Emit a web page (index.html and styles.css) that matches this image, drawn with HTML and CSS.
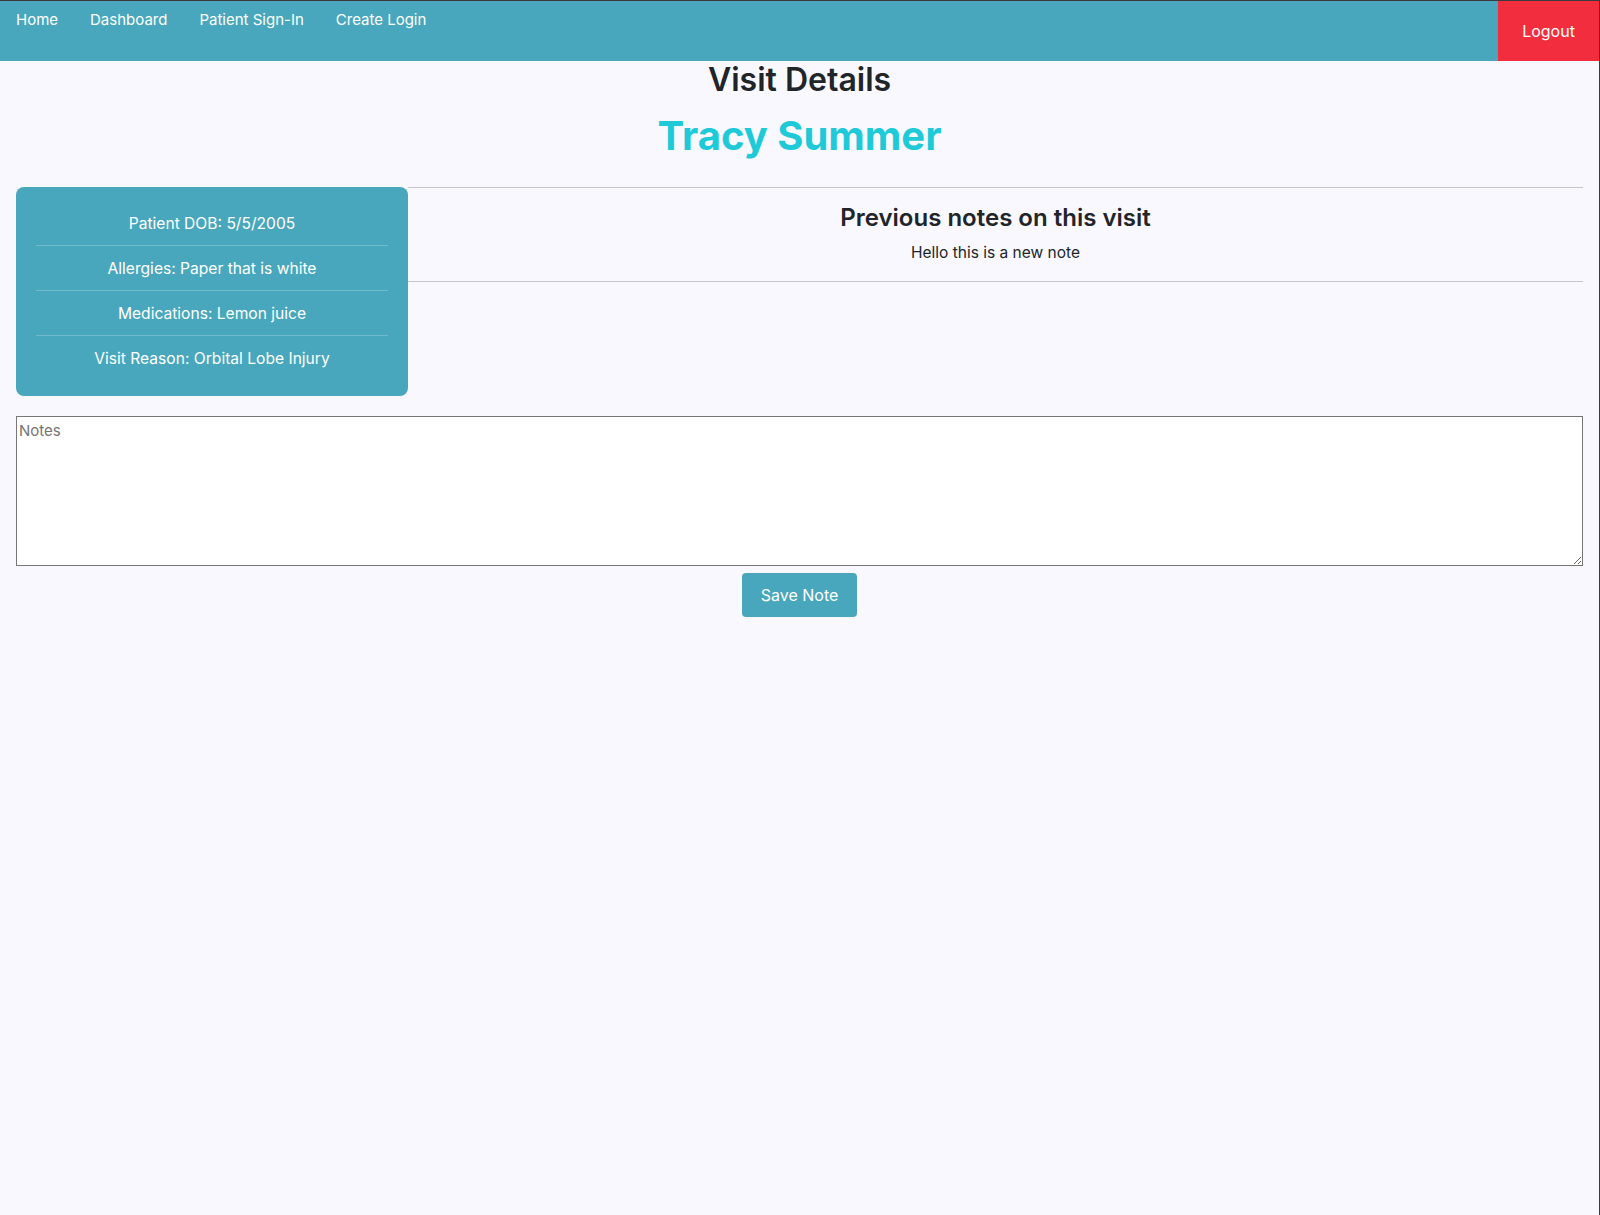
FILE: index.html
```html
<!DOCTYPE html>
<html lang="en">
<head>
<meta charset="utf-8">
<title>Visit Details</title>
<link rel="stylesheet" href="styles.css">
</head>
<body>
<div class="frame">
  <nav class="navbar">
    <div class="nav-links">
      <a href="#" class="nav-link">Home</a>
      <a href="#" class="nav-link">Dashboard</a>
      <a href="#" class="nav-link">Patient Sign-In</a>
      <a href="#" class="nav-link">Create Login</a>
    </div>
    <a href="#" class="logout">Logout</a>
  </nav>
  <main class="page">
    <h1 class="title">Visit Details</h1>
    <h2 class="patient-name">Tracy Summer</h2>
    <div class="visit-row">
      <ul class="info-card">
        <li class="info-item">Patient DOB: 5/5/2005</li>
        <li class="info-item">Allergies: Paper that is white</li>
        <li class="info-item">Medications: Lemon juice</li>
        <li class="info-item">Visit Reason: Orbital Lobe Injury</li>
      </ul>
      <section class="notes-section">
        <h3 class="notes-title">Previous notes on this visit</h3>
        <p class="note">Hello this is a new note</p>
      </section>
    </div>
    <textarea class="notes-input" placeholder="Notes"></textarea>
    <div class="actions">
      <button class="save-btn" type="button">Save Note</button>
    </div>
  </main>
</div>
</body>
</html>
```
FILE: styles.css
```css
html, body {
  margin: 0;
  padding: 0;
  height: 100%;
}
body {
  background: #f9f8fe;
  font-family: Inter, "Open Sans", "Liberation Sans", sans-serif;
  color: #212529;
}
.frame {
  min-height: 100%;
  box-sizing: border-box;
  border-top: 1px solid #3a3a3a;
  border-right: 1px solid #3a3a3a;
}
.navbar {
  height: 60px;
  background: #48a7bc;
  display: flex;
  justify-content: space-between;
  align-items: stretch;
}
.nav-links {
  display: flex;
  align-items: flex-start;
  padding-left: 16px;
  gap: 32px;
  padding-top: 9px;
}
.nav-link {
  color: #ffffff;
  text-decoration: none;
  font-size: 15px;
  line-height: 20px;
}
.logout {
  background: #f22e3e;
  color: #ffffff;
  text-decoration: none;
  font-size: 16px;
  width: 101px;
  display: flex;
  align-items: center;
  justify-content: center;
  box-sizing: border-box;
}
.page {
  padding: 0 16px;
}
.title {
  margin: 0;
  text-align: center;
  font-size: 32px;
  font-weight: 600;
  line-height: 38px;
  color: #212529;
}
.patient-name {
  margin: 0;
  padding-top: 13px;
  text-align: center;
  font-size: 40px;
  font-weight: 700;
  line-height: 48px;
  color: #1fcad8;
}
.visit-row {
  display: flex;
  align-items: flex-start;
  margin-top: 27px;
}
.info-card {
  list-style: none;
  margin: 0;
  width: 392px;
  box-sizing: border-box;
  padding: 14px 20px 15px;
  background: #48a7bc;
  border-radius: 8px;
  color: #ffffff;
}
.info-item {
  height: 45px;
  display: flex;
  align-items: center;
  justify-content: center;
  font-size: 15.6px;
  border-bottom: 1px solid rgba(255, 255, 255, 0.22);
  box-sizing: border-box;
}
.info-item:last-child {
  border-bottom: none;
}
.notes-section {
  flex: 1;
  border-top: 1px solid #c8c8cc;
  border-bottom: 1px solid #c8c8cc;
  text-align: center;
  padding: 14px 0 18px;
}
.notes-title {
  margin: 0;
  font-size: 24px;
  font-weight: 600;
  line-height: 32px;
}
.note {
  margin: 9px 0 0;
  font-size: 15.5px;
  line-height: 20px;
}
.notes-input {
  display: block;
  margin-top: 20px;
  width: 100%;
  height: 150px;
  box-sizing: border-box;
  border: 1px solid #767676;
  background: #ffffff;
  padding: 4px 2px;
  font-family: inherit;
  font-size: 15px;
  resize: vertical;
}
.notes-input::placeholder {
  color: #757575;
}
.actions {
  display: flex;
  justify-content: center;
  margin-top: 7px;
}
.save-btn {
  width: 115px;
  height: 44px;
  border: none;
  border-radius: 4px;
  background: #48a7bc;
  color: #ffffff;
  font-family: inherit;
  font-size: 16px;
  cursor: pointer;
}
```
